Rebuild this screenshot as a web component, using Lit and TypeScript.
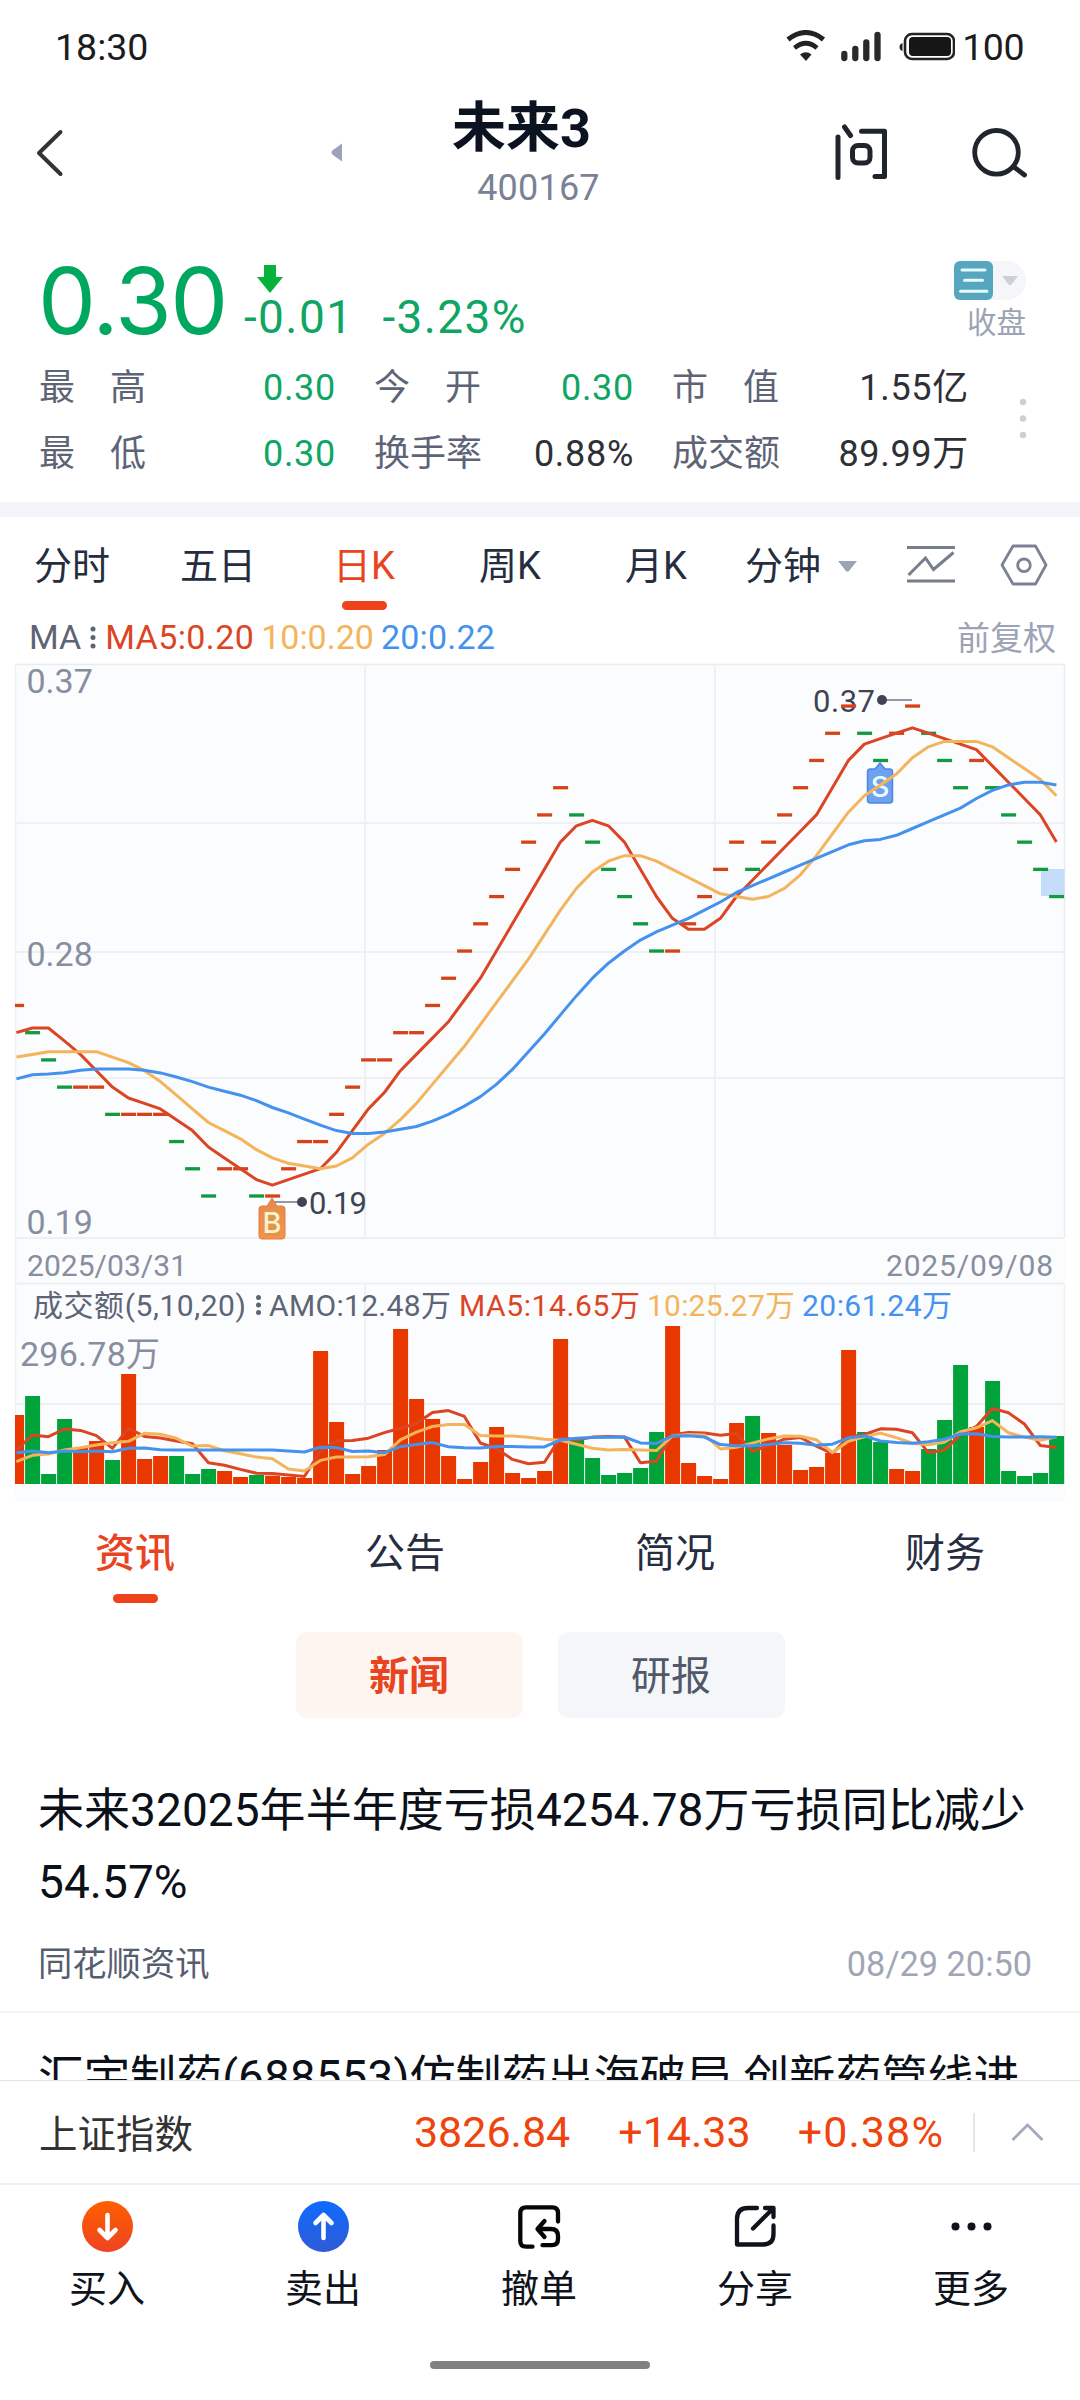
import { LitElement, html, svg, css } from "lit";
import { customElement, property } from "lit/decorators.js";
import { classMap } from "lit/directives/class-map.js";

const RED = "#DB4524";
const ORANGE = "#F4B45B";
const BLUE = "#4592EE";
const UP = "#E83800";
const DOWN = "#00A33A";

/** Closing price in cents, one per trading day. */
const PRICES = [
  26, 25, 24, 23, 23, 23, 22, 22, 22, 22, 21, 20, 19, 20, 20, 19, 19, 20, 21, 21, 22, 23,
  24, 24, 25, 25, 26, 27, 28, 29, 30, 31, 32, 33, 34, 33, 32, 31, 30, 29, 28, 28, 29, 30,
  31, 32, 31, 32, 33, 34, 35, 36, 37, 36, 35, 36, 37, 36, 35, 34, 35, 34, 33, 32, 31, 30,
];
const FALLING = new Set([
  1, 2, 3, 6, 10, 11, 12, 15, 35, 36, 37, 38, 39, 40, 46, 53, 54, 57, 58, 59, 61, 62, 63, 64, 65,
]);
/** Turnover of each day, in thirds of a pixel of bar height. */
const VOLUMES = [
  207, 264, 30, 195, 108, 129, 72, 330, 75, 84, 84, 30, 45, 39, 21, 27, 25, 21, 18, 399,
  186, 30, 54, 102, 465, 255, 195, 84, 15, 66, 171, 33, 18, 39, 435, 134, 78, 27, 33, 48,
  156, 474, 63, 24, 15, 183, 204, 153, 117, 42, 51, 93, 402, 156, 126, 45, 39, 105, 192,
  357, 171, 309, 39, 24, 33, 144,
];

/** Moving average; the head covers the days whose window starts before the data. */
function average(data: number[], span: number, head: number[]): number[] {
  return data.map((_, i) =>
    i < head.length ? head[i] : data.slice(i - span + 1, i + 1).reduce((a, b) => a + b, 0) / span
  );
}

const priceAverages = [
  { color: RED, values: average(PRICES, 5, [25.0, 25.17, 25.17, 24.7]) },
  { color: ORANGE, values: average(PRICES, 10, [24.1, 24.2, 24.3, 24.3, 24.3, 24.3, 24.1, 23.9, 23.6]) },
  {
    color: BLUE,
    values: average(PRICES, 20, [
      23.3, 23.45, 23.48, 23.53, 23.62, 23.66, 23.66, 23.66, 23.62, 23.52, 23.37, 23.2, 23.0, 22.85,
      22.7, 22.5, 22.25, 22.05, 21.82,
    ]),
  },
];
const volumeAverages = [
  { color: RED, values: average(VOLUMES, 5, [102, 147, 142, 165]) },
  { color: ORANGE, values: average(VOLUMES, 10, [67, 86, 90, 102, 109, 117, 124, 128, 152]) },
  {
    color: BLUE,
    values: average(VOLUMES, 20, [
      94, 99, 94, 99, 97, 99, 97, 107, 108, 103, 102, 102, 102, 102, 102, 102, 102, 99, 96,
    ]),
  },
];

const centerX = (i: number) => 16.4 + 16 * i;
const priceY = (cents: number) => 706 + (37 - cents) * 27.22;
const volumeY = (v: number) => 1484 - v / 3;
const barBox = (i: number) => {
  const left = Math.max(15, 9.1 + 16 * i);
  return { left, width: 24.1 + 16 * i - left };
};
const points = (values: number[], y: (v: number) => number) =>
  values.map((v, i) => `${centerX(i).toFixed(1)},${y(v).toFixed(1)}`).join(" ");

const FONT = css`
  :host {
    display: block;
    font-family: Roboto, "Noto Sans CJK SC", sans-serif;
  }
  * {
    box-sizing: border-box;
  }
  svg {
    display: block;
    flex: none;
  }
`;

@customElement("stock-chart")
export class StockChart extends LitElement {
  static styles = [
    FONT,
    css`
      text {
        font-family: Roboto, "Noto Sans CJK SC", sans-serif;
      }
      .axis {
        font-size: 34px;
        fill: #878e9f;
      }
      .date {
        font-size: 30px;
        fill: #878e9f;
      }
      .note {
        font-size: 31px;
        fill: #3e4454;
      }
      .legend {
        font-size: 30px;
        fill: #5d6475;
      }
      .five {
        fill: #db4524;
      }
      .ten {
        fill: #f4b45b;
      }
      .twenty {
        fill: #4592ee;
      }
      .mark {
        font-family: Inter, sans-serif;
        font-size: 29px;
        font-weight: 500;
        text-anchor: middle;
      }
    `,
  ];

  render() {
    return html`<svg width="1080" height="842" viewBox="0 660 1080 842">
      <defs>
        <linearGradient id="buy" x1="0" y1="0" x2="0" y2="1">
          <stop offset="0" stop-color="#E8874F" />
          <stop offset="1" stop-color="#F5934A" />
        </linearGradient>
      </defs>
      <rect x="15" y="664" width="1050" height="838" fill="#FBFCFE" />
      <g fill="none" stroke="#EEF0F3" stroke-width="2">
        <path d="M15 664.5H1064.5V1238" stroke="#E8EBEF" stroke-width="1.5" />
        <path d="M15 823H1064M15 952H1064M15 1078H1064M15 1238H1064M15 1283.5H1064M15 1404H1064" />
        <path d="M365 664V1238M715 664V1238M365 1284V1484M715 1284V1484" />
        <path d="M15.5 664V1484M1064.5 1284V1484" stroke-width="1.5" />
      </g>

      <text class="axis" x="26.5" y="693">0.37</text>
      <text class="axis" x="26.5" y="966">0.28</text>
      <text class="axis" x="26.5" y="1234">0.19</text>
      <text class="date" x="27" y="1276" textLength="160">2025/03/31</text>
      <text class="date" x="886" y="1276" textLength="167">2025/09/08</text>

      <rect x="1041" y="869" width="23.5" height="27" fill="#C5DCFB" />
      <path d="M882 700H912M272 1202H302" stroke="#9298A6" stroke-width="2" />
      <circle cx="882" cy="700" r="5" fill="#3E4454" />
      <circle cx="302" cy="1202" r="5" fill="#3E4454" />
      <text class="note" x="813" y="711.5" textLength="62">0.37</text>
      <text class="note" x="309" y="1213.5" textLength="58">0.19</text>

      ${PRICES.map((p, i) => {
        const b = barBox(i);
        return svg`<rect x=${b.left} y=${priceY(p) - 1.6} width=${b.width} height="3.3"
          fill=${FALLING.has(i) ? "#129A40" : "#D6431B"} />`;
      })}

      <path
        d="M262 1206h5l5-8 5 8h5q3 0 3 3v27q0 3-3 3h-20q-3 0-3-3v-27q0-3 3-3z"
        fill="url(#buy)"
        stroke="#E37F42"
        stroke-width="1"
      />
      <rect x="263.5" y="1209.5" width="17" height="26" rx="2" fill="#DE9748" />
      <text class="mark" x="272" y="1233" fill="#FFEFCB">B</text>
      <path
        d="M870.5 769h4.5l5-6 5 6h4.500q3 0 3 3v28q0 3-3 3h-19q-3 0-3-3v-28q0-3 3-3z"
        fill="#6EA1F0"
        stroke="#4C86E4"
        stroke-width="1.5"
      />
      <text class="mark" x="880" y="797" fill="#EAFBFF">S</text>

      ${priceAverages.map(
        (l) => svg`<polyline points=${points(l.values, priceY)} fill="none" stroke=${l.color}
          stroke-width="3" stroke-linejoin="round" />`
      )}

      <text class="legend" x="33" y="1316" textLength="213">成交额(5,10,20)</text>
      <g fill="#5D6475">
        <circle cx="258.5" cy="1297.5" r="2.5" />
        <circle cx="258.5" cy="1305" r="2.5" />
        <circle cx="258.5" cy="1312.5" r="2.5" />
      </g>
      <text class="legend" x="269" y="1316" textLength="182">AMO:12.48万</text>
      <text class="legend five" x="459" y="1316" textLength="181">MA5:14.65万</text>
      <text class="legend ten" x="647" y="1316" textLength="148">10:25.27万</text>
      <text class="legend twenty" x="802" y="1316" textLength="150">20:61.24万</text>
      <text class="axis" x="20" y="1366" textLength="140">296.78万</text>

      ${VOLUMES.map((v, i) => {
        const b = barBox(i);
        return svg`<rect x=${b.left} y=${volumeY(v)} width=${b.width} height=${v / 3}
          fill=${FALLING.has(i) ? DOWN : UP} />`;
      })}
      ${volumeAverages.map(
        (l) => svg`<polyline points=${points(l.values, volumeY)} fill="none" stroke=${l.color}
          stroke-width="3" stroke-linejoin="round" />`
      )}
    </svg>`;
  }
}

@customElement("status-bar")
export class StatusBar extends LitElement {
  static styles = [
    FONT,
    css`
      .bar {
        display: flex;
        align-items: center;
        height: 93px;
        padding: 0 56px 0 55px;
        font-size: 37.5px;
        color: #1c1c1e;
      }
      .time {
        flex: 1;
      }
      .level {
        letter-spacing: -0.5px;
        margin-left: 7px;
      }
    `,
  ];

  render() {
    return html`<div class="bar">
      <span class="time">18:30</span>
      <svg width="170" height="34" viewBox="785 29 170 34">
        <g fill="none" stroke="#232323">
          <path d="M788 38.5Q806 24.5 823.5 38.5" stroke-width="5" />
          <path d="M794.5 47Q806 37.5 817 47" stroke-width="4.6" />
        </g>
        <path d="M800 53.5Q806 49 811.5 53.5L806 60z" fill="#232323" />
        <path d="M844.3 53V57M855.3 48V57M866.3 41.5V57M877.5 34V57" stroke="#2A2A2A" stroke-width="6.3" stroke-linecap="round" />
        <path d="M902.5 42v8q-3-1-3-4t3-4z" fill="#232323" />
        <rect x="905" y="33" width="49" height="25" rx="7" fill="#fff" stroke="#232323" stroke-width="2.6" />
        <rect x="909" y="36" width="42" height="19" rx="4" fill="#161616" />
      </svg>
      <span class="level">100</span>
    </div>`;
  }
}

@customElement("stock-header")
export class StockHeader extends LitElement {
  static styles = [
    FONT,
    css`
      .head {
        display: flex;
        align-items: center;
        height: 119px;
        padding-left: 34px;
      }
      .prev {
        margin-left: 267px;
      }
      .names {
        width: 393px;
        display: flex;
        flex-direction: column;
        align-items: center;
        gap: 4px;
        padding-top: 3px;
      }
      .name {
        font-size: 54px;
        line-height: 64px;
        font-weight: 700;
        color: #0b1220;
        padding-right: 34px;
      }
      .code {
        font-size: 36px;
        line-height: 46px;
        letter-spacing: 0.2px;
        color: #7a8296;
      }
      .ask {
        margin-left: 98px;
      }
      .find {
        margin-left: 82px;
      }
    `,
  ];

  render() {
    return html`<div class="head">
      <svg width="30" height="50" viewBox="34 128 30 50" fill="none" stroke="#333" stroke-width="4" stroke-linecap="round" stroke-linejoin="round">
        <path d="M60.500 132L39 153L60.500 174" />
      </svg>
      <svg class="prev" width="11" height="20" viewBox="331 143 11 20" fill="#9AA3B8">
        <path d="M342 143.500v18L333 155q-3-2.500 0-5z" />
      </svg>
      <div class="names">
        <span class="name">未来3</span>
        <span class="code">400167</span>
      </div>
      <svg class="ask" width="56" height="58" viewBox="833 124 56 58" fill="none" stroke="#20242C" stroke-width="5" stroke-linecap="round" stroke-linejoin="round">
        <path d="M838 137V177.500M844.500 127L850.500 135.500M861.500 131.300H884.500V176.500H875" />
        <rect x="852.500" y="145.500" width="17.500" height="17.500" rx="5.500" />
      </svg>
      <svg class="find" width="58" height="54" viewBox="971 126 58 54" fill="none" stroke="#20242C" stroke-width="4.800" stroke-linecap="round">
        <circle cx="996.500" cy="152.300" r="21.800" />
        <path d="M1014 167L1024.500 175" />
      </svg>
    </div>`;
  }
}

@customElement("quote-panel")
export class QuotePanel extends LitElement {
  static styles = [
    FONT,
    css`
      .panel {
        height: 305px;
        padding: 48px 39px 0;
        border-bottom: 15px solid #f4f5fa;
      }
      .top {
        display: flex;
        height: 80px;
        color: #0fa563;
      }
      .price {
        width: 203px;
        font-family: Inter, Roboto, sans-serif;
        font-size: 92px;
        line-height: 82px;
        letter-spacing: -1.4px;
        color: #00a85f;
        margin-left: -1px;
      }
      .moves {
        flex: 1;
        padding-top: 3px;
      }
      .down {
        margin-left: 16px;
      }
      .change {
        display: flex;
        gap: 29px;
        font-size: 46px;
        line-height: 50px;
        letter-spacing: 1.4px;
        margin-top: -1px;
        padding-left: 3px;
      }
      .state {
        display: flex;
        flex-direction: column;
        align-items: flex-end;
        padding: 1px 15px 0 0;
        font-size: 29.5px;
        line-height: 34px;
        color: #9ba3b5;
        gap: 6px;
      }
      .body {
        display: flex;
        padding-top: 15px;
      }
      .stats {
        display: grid;
        grid-template-columns: 297px 260px 297px;
        column-gap: 38px;
        grid-auto-rows: 66px;
        font-size: 36px;
        line-height: 66px;
      }
      .item {
        display: flex;
        justify-content: space-between;
      }
      .label {
        width: 107px;
        display: flex;
        justify-content: space-between;
        color: #5d6475;
      }
      .value {
        letter-spacing: 0.7px;
        color: #2e3035;
      }
      .low {
        color: #0fa563;
      }
      .more {
        margin: 43px 0 0 50px;
      }
    `,
  ];

  private stats = [
    { label: "最高", value: "0.30", low: true },
    { label: "今开", value: "0.30", low: true },
    { label: "市值", value: "1.55亿", low: false },
    { label: "最低", value: "0.30", low: true },
    { label: "换手率", value: "0.88%", low: false },
    { label: "成交额", value: "89.99万", low: false },
  ];

  render() {
    return html`<div class="panel">
      <div class="top">
        <div class="price">0.30</div>
        <div class="moves">
          <svg class="down" width="26" height="30" viewBox="0 0 26 30">
            <path d="M7 2H19V14H26L13 30L0 14H7z" fill="#07B23A" />
          </svg>
          <div class="change"><span>-0.01</span><span>-3.23%</span></div>
        </div>
        <div class="state">
          <svg width="72" height="39" viewBox="954 261 72 39">
            <path d="M980 261h26.500a19.500 19.500 0 0 1 0 39H980z" fill="#F5F6F9" />
            <rect x="954" y="261" width="39" height="39" rx="6" fill="#55A6BE" />
            <path d="M962 270H985M964.500 280.300H982.500M960.500 291.300H987" stroke="#E6FBFF" stroke-width="3" stroke-linecap="round" />
            <path d="M1002 276H1018L1011.500 284.500Q1010 286 1008.500 284.500z" fill="#CDD0D6" />
          </svg>
          <span>收盘</span>
        </div>
      </div>
      <div class="body">
        <div class="stats">
          ${this.stats.map(
            (s) => html`<div class="item">
              <span class="label">${[...s.label].map((c) => html`<span>${c}</span>`)}</span>
              <span class=${classMap({ value: true, low: s.low })}>${s.value}</span>
            </div>`
          )}
        </div>
        <svg class="more" width="8" height="42" viewBox="0 0 8 42" fill="#CBCFDA">
          <circle cx="4" cy="4" r="3.200" />
          <circle cx="4" cy="20.500" r="3.200" />
          <circle cx="4" cy="37" r="3.200" />
        </svg>
      </div>
    </div>`;
  }
}

@customElement("tab-strip")
export class TabStrip extends LitElement {
  @property({ attribute: false }) items: string[] = [];
  @property({ type: Number }) active = 0;

  static styles = [
    FONT,
    css`
      .strip {
        display: grid;
        grid-auto-flow: column;
        grid-auto-columns: 1fr;
      }
      .tab {
        display: flex;
        flex-direction: column;
        align-items: center;
        gap: var(--tab-gap, 5px);
        font-size: var(--tab-size, 38px);
        line-height: 60px;
        color: #252d3f;
      }
      .active {
        color: #e8441f;
        font-weight: var(--tab-weight, 400);
      }
      .active::after {
        content: "";
        width: 45px;
        height: 9px;
        border-radius: 4.5px;
        background: #ef421b;
      }
    `,
  ];

  render() {
    return html`<div class="strip">
      ${this.items.map(
        (t, i) => html`<div class=${classMap({ tab: true, active: i === this.active })}>${t}</div>`
      )}
    </div>`;
  }
}

@customElement("news-list")
export class NewsList extends LitElement {
  static styles = [
    FONT,
    css`
      .list {
        height: 362px;
        overflow: hidden;
        padding-top: 56px;
      }
      .entry {
        padding: 0 48px 22px 38px;
        border-bottom: 2px solid #f2f3f5;
        margin-bottom: 28px;
      }
      .title {
        font-size: 46px;
        line-height: 72px;
        letter-spacing: 0.05px;
        color: #0c1019;
      }
      .meta {
        display: flex;
        justify-content: space-between;
        margin-top: 21px;
        font-size: 34.3px;
        line-height: 50px;
        color: #565d6e;
      }
      .when {
        color: #a0a6b5;
      }
    `,
  ];

  render() {
    return html`<div class="list">
      <div class="entry">
        <div class="title">未来32025年半年度亏损4254.78万亏损同比减少54.57%</div>
        <div class="meta"><span>同花顺资讯</span><span class="when">08/29 20:50</span></div>
      </div>
      <div class="entry">
        <div class="title">汇宇制药(688553)仿制药出海破局 创新药管线进</div>
      </div>
    </div>`;
  }
}

@customElement("index-bar")
export class IndexBar extends LitElement {
  static styles = [
    FONT,
    css`
      .bar {
        display: flex;
        align-items: center;
        height: 105px;
        padding: 0 36px 0 39px;
        border-top: 1px solid #e1e3e7;
        border-bottom: 2px solid #eceff5;
        background: #fff;
        font-size: 43px;
        color: #f0440f;
      }
      .name {
        flex: 1;
        font-size: 38.5px;
        padding-bottom: 3px;
        color: #333;
      }
      .delta {
        margin-left: 48px;
      }
      .percent {
        margin-left: 47px;
        letter-spacing: 1.1px;
      }
      .fold {
        margin-left: 29px;
        padding-left: 36px;
        border-left: 2px solid #e3e6ec;
        height: 39px;
        display: flex;
        align-items: center;
      }
    `,
  ];

  render() {
    return html`<div class="bar">
      <span class="name">上证指数</span>
      <span>3826.84</span>
      <span class="delta">+14.33</span>
      <span class="percent">+0.38%</span>
      <div class="fold">
        <svg width="33" height="20" viewBox="0 0 33 20" fill="none" stroke="#A3ABBD" stroke-width="2.8">
          <path d="M1.500 18L16.500 3L31.500 18" />
        </svg>
      </div>
    </div>`;
  }
}

const NAV = [
  {
    label: "买入",
    icon: svg`<circle cx="25.500" cy="25.500" r="25.500" fill="url(#warm)" />
      <path d="M25.500 14V36M17.500 29L25.500 37L33.500 29" fill="none" stroke="#fff" stroke-width="4.600" stroke-linecap="round" stroke-linejoin="round" />`,
  },
  {
    label: "卖出",
    icon: svg`<circle cx="25.500" cy="25.500" r="25.500" fill="url(#cool)" />
      <path d="M25.500 37V15M17.500 22L25.500 14L33.500 22" fill="none" stroke="#fff" stroke-width="4.600" stroke-linecap="round" stroke-linejoin="round" />`,
  },
  {
    label: "撤单",
    icon: svg`<g fill="none" stroke="#050608" stroke-width="4.300" stroke-linecap="round" stroke-linejoin="round">
      <path d="M44 20.500V12Q44 6.300 38.300 6.300H12Q6.300 6.300 6.300 12V40Q6.300 45.700 12 45.700H18.500" />
      <path d="M30.500 20L23.500 28L30.500 36M24 28H37Q44 28 44 35V38Q44 44.200 38 44.200H28.500" />
    </g>`,
  },
  {
    label: "分享",
    icon: svg`<g fill="none" stroke="#0F131B" stroke-width="4.300" stroke-linecap="round" stroke-linejoin="round">
      <path d="M27 7H18Q7 7 7 18V43.500H33Q43.500 43.500 43.500 33V24.500" />
      <path d="M35 7H43.500V16M43 7.500L23 27.500" />
    </g>`,
  },
  {
    label: "更多",
    icon: svg`<g fill="#0F131B">
      <circle cx="9.500" cy="25.500" r="4" /><circle cx="25.500" cy="25.500" r="4" /><circle cx="41.500" cy="25.500" r="4" />
    </g>`,
  },
];

@customElement("bottom-nav")
export class BottomNav extends LitElement {
  static styles = [
    FONT,
    css`
      .nav {
        display: grid;
        grid-template-columns: repeat(5, 1fr);
        padding: 16px 1px 0 0;
        margin-left: -1px;
        height: 176px;
      }
      .item {
        display: flex;
        flex-direction: column;
        align-items: center;
        gap: 12px;
        font-size: 38px;
        line-height: 50px;
        color: #0f131b;
      }
      .home {
        width: 220px;
        height: 8px;
        border-radius: 4px;
        background: #808080;
        margin: 0 auto;
      }
    `,
  ];

  render() {
    return html`<div class="nav">
        ${NAV.map(
          (n) => html`<div class="item">
            <svg width="51" height="51" viewBox="0 0 51 51">
              <defs>
                <linearGradient id="warm" x1="0" y1="0" x2="0" y2="1">
                  <stop offset="0" stop-color="#FF5E00" /><stop offset="1" stop-color="#EE4322" />
                </linearGradient>
                <linearGradient id="cool" x1="0" y1="0" x2="0" y2="1">
                  <stop offset="0" stop-color="#0F6BFF" /><stop offset="1" stop-color="#2E5BD6" />
                </linearGradient>
              </defs>
              ${n.icon}
            </svg>
            <span>${n.label}</span>
          </div>`
        )}
      </div>
      <div class="home"></div>`;
  }
}

@customElement("app-root")
export class AppRoot extends LitElement {
  static styles = [
    FONT,
    css`
      :host {
        width: 1080px;
        height: 2400px;
        overflow: hidden;
        background: #fff;
      }
      .periods {
        display: flex;
        height: 98px;
        padding-top: 19px;
        font-size: 38px;
        line-height: 60px;
        color: #252d3f;
      }
      .periods tab-strip {
        width: 730px;
        margin-left: -1px;
      }
      .minutes {
        display: flex;
        align-items: center;
        gap: 17px;
        height: 60px;
        padding-left: 16px;
      }
      .trend {
        margin: 9px 0 0 50px;
      }
      .config {
        margin: 8px 0 0 45px;
      }
      .averages {
        display: flex;
        align-items: center;
        height: 43px;
        margin-bottom: 2px;
        padding: 0 24px 0 29px;
        font-size: 34px;
        color: #5d6475;
      }
      .dots {
        margin: 0 9px 0 9px;
      }
      .ma5 {
        color: #db4524;
        letter-spacing: 0.4px;
      }
      .ma10 {
        color: #f4b45b;
        margin-left: 7px;
      }
      .ma20 {
        color: #4592ee;
        margin-left: 7px;
        letter-spacing: 0.2px;
        flex: 1;
      }
      .adjust {
        font-size: 33px;
        padding-bottom: 2px;
        color: #9ba3b5;
      }
      .sections {
        padding-top: 22px;
        height: 130px;
        --tab-size: 40px;
        --tab-gap: 10px;
        --tab-weight: 500;
      }
      .pills {
        display: flex;
        justify-content: center;
        gap: 35px;
      }
      .pill {
        width: 227px;
        height: 86px;
        border-radius: 11px;
        background: #f4f6fa;
        color: #51586a;
        font-size: 40px;
        line-height: 90px;
        text-align: center;
      }
      .picked {
        background: #fff5f0;
        color: #e8441f;
        font-weight: 700;
      }
    `,
  ];

  render() {
    return html`
      <status-bar></status-bar>
      <stock-header></stock-header>
      <quote-panel></quote-panel>
      <div class="periods">
        <tab-strip .items=${["分时", "五日", "日K", "周K", "月K"]} active="2"></tab-strip>
        <div class="minutes">
          <span>分钟</span>
          <svg width="19" height="12" viewBox="0 0 19 12"><path d="M0 1H19L11 11Q9.500 12.500 8 11z" fill="#9BA3B5" /></svg>
        </div>
        <svg class="trend" width="48" height="38" viewBox="907 544 48 38" fill="none" stroke="#757D8E" stroke-width="3.200">
          <path d="M907 546.500H955M907 580H955" />
          <path d="M908.500 574L925.500 557L933.500 568.500L953.500 551.500" stroke-width="3" />
        </svg>
        <svg class="config" width="48" height="42" viewBox="1000 542 48 42" fill="none" stroke="#7C8294" stroke-width="2.800">
          <path d="M1013 544H1035.500L1046 563L1035.500 582H1013L1002 563z" stroke-linejoin="round" />
          <circle cx="1024" cy="563.300" r="6.300" />
        </svg>
      </div>
      <div class="averages">
        <span>MA</span>
        <svg class="dots" width="6" height="24" viewBox="0 0 6 24" fill="#5D6475">
          <circle cx="3" cy="4" r="2.500" /><circle cx="3" cy="12.500" r="2.500" /><circle cx="3" cy="21" r="2.500" />
        </svg>
        <span class="ma5">MA5:0.20</span>
        <span class="ma10">10:0.20</span>
        <span class="ma20">20:0.22</span>
        <span class="adjust">前复权</span>
      </div>
      <stock-chart></stock-chart>
      <div class="sections">
        <tab-strip .items=${["资讯", "公告", "简况", "财务"]} active="0"></tab-strip>
      </div>
      <div class="pills">
        <div class="pill picked">新闻</div>
        <div class="pill">研报</div>
      </div>
      <news-list></news-list>
      <index-bar></index-bar>
      <bottom-nav></bottom-nav>
    `;
  }
}
